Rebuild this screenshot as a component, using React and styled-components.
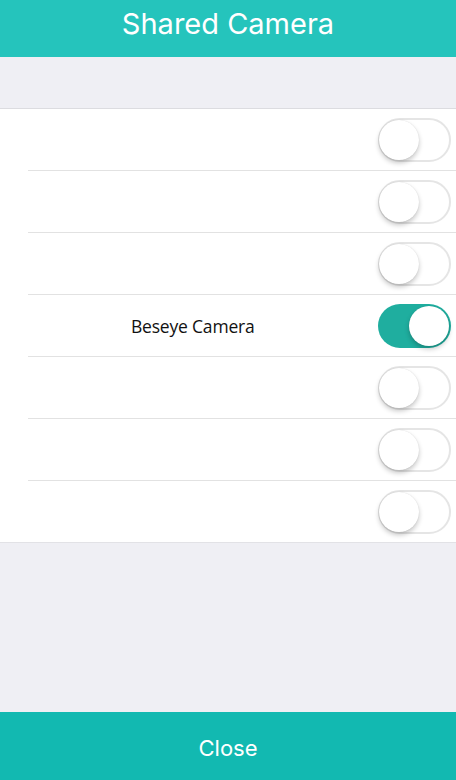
import React from "react";
import styled, { createGlobalStyle } from "styled-components";

const Global = createGlobalStyle`
  html, body { margin: 0; padding: 0; }
  body { background: #efeff4; font-family: "Roboto", "Liberation Sans", sans-serif; }
  #root { height: 780px; }
`;

const Page = styled.div`
  width: 456px;
  height: 780px;
  display: flex;
  flex-direction: column;
  background: #efeff4;
`;

const Header = styled.div`
  height: 57px;
  background: #25c4bc;
  color: #fff;
  display: flex;
  align-items: center;
  justify-content: center;
  font-family: "Inter", "Roboto", sans-serif;
  font-size: 29px;
  padding-bottom: 10px;
  box-sizing: border-box;
`;

const Spacer = styled.div`
  height: 51px;
  border-bottom: 1px solid #dcdce0;
`;

const List = styled.div`
  background: #fff;
  border-bottom: 1px solid #e2e2e6;
`;

const Row = styled.div`
  height: 61px;
  display: flex;
  align-items: center;
  margin-left: 28px;
  padding-right: 5px;
  border-bottom: ${(p) => (p.$last ? "none" : "1px solid #e2e2e2")};
`;

const Label = styled.div`
  flex: 1;
  padding-left: 103px;
  font-family: "Open Sans", "Lato", sans-serif;
  font-size: 17.5px;
  letter-spacing: -0.2px;
  color: #111;
`;

const Toggle = styled.div`
  position: relative;
  width: 73px;
  height: 44px;
  border-radius: 22px;
  box-sizing: border-box;
  background: ${(p) => (p.$on ? "#1fae9f" : "#fff")};
  border: ${(p) => (p.$on ? "none" : "2px solid #e5e5e5")};
`;

const Knob = styled.div`
  position: absolute;
  top: ${(p) => (p.$on ? "2px" : "0px")};
  left: ${(p) => (p.$on ? "31px" : "-1px")};
  width: 40px;
  height: 40px;
  border-radius: 50%;
  background: #fff;
  box-shadow: 0 3px 5px rgba(0, 0, 0, 0.22), 0 0 1px rgba(0, 0, 0, 0.15);
`;

const Fill = styled.div`
  flex: 1;
`;

const Footer = styled.div`
  height: 68px;
  background: #12b9b1;
  color: #fff;
  display: flex;
  align-items: center;
  justify-content: center;
  padding-top: 4px;
  box-sizing: border-box;
  font-family: "Inter", "Roboto", sans-serif;
  font-size: 22px;
`;

const rows = ["", "", "", "Beseye Camera", "", "", ""];

export default function App() {
  return (
    <Page>
      <Global />
      <Header>Shared Camera</Header>
      <Spacer />
      <List>
        {rows.map((name, i) => {
          const on = name !== "";
          return (
            <Row key={i} $last={i === rows.length - 1}>
              <Label>{name}</Label>
              <Toggle $on={on}>
                <Knob $on={on} />
              </Toggle>
            </Row>
          );
        })}
      </List>
      <Fill />
      <Footer>Close</Footer>
    </Page>
  );
}
